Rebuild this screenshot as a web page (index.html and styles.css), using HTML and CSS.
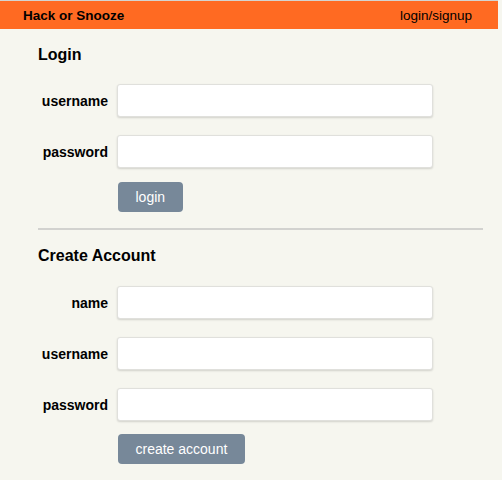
FILE: index.html
```html
<!DOCTYPE html>
<html>
<head>
<meta charset="utf-8">
<link rel="stylesheet" href="styles.css">
</head>
<body>
<div class="page">
  <nav class="nav">
    <span class="brand">Hack or Snooze</span>
    <span class="nav-link">login/signup</span>
  </nav>
  <main class="forms">
    <form class="account-form">
      <h3 class="form-title">Login</h3>
      <div class="row"><label class="label">username</label><input class="field" type="text"></div>
      <div class="row row-last"><label class="label">password</label><input class="field" type="password"></div>
      <div class="actions"><button class="btn" type="button">login</button></div>
    </form>
    <hr class="divider">
    <form class="account-form">
      <h3 class="form-title title-create">Create Account</h3>
      <div class="row"><label class="label">name</label><input class="field" type="text"></div>
      <div class="row"><label class="label">username</label><input class="field" type="text"></div>
      <div class="row row-last2"><label class="label">password</label><input class="field" type="password"></div>
      <div class="actions"><button class="btn" type="button">create account</button></div>
    </form>
  </main>
</div>
</body>
</html>
```
FILE: styles.css
```css
html, body {
  margin: 0;
  padding: 0;
  background: #f6f6ef;
}
.page {
  width: 498px;
  height: 479px;
  border-top: 1px solid #d4d4d0;
  font-family: "Liberation Sans", Arial, sans-serif;
  color: #000;
}
.nav {
  height: 28px;
  background: #ff6a22;
  display: flex;
  align-items: center;
  justify-content: space-between;
  padding: 0 26px 0 23px;
  font-size: 13.5px;
}
.brand {
  font-weight: bold;
}
.forms {
  width: 445px;
  padding: 17px 0 0 38px;
}
.account-form {
  display: flex;
  flex-direction: column;
  margin: 0;
}
.form-title {
  margin: 0 0 20px 0;
  font-size: 16px;
  line-height: 18px;
  font-weight: bold;
}
.title-create {
  margin-bottom: 21px;
}
.row {
  display: flex;
  align-items: center;
  gap: 9px;
  margin-bottom: 18px;
}
.row-last {
  margin-bottom: 14px;
}
.row-last2 {
  margin-bottom: 13px;
}
.label {
  width: 70px;
  text-align: right;
  font-size: 14px;
  font-weight: bold;
}
.field {
  width: 316px;
  height: 33px;
  box-sizing: border-box;
  border: 1px solid #e0e0dc;
  border-radius: 3px;
  background: #fff;
  box-shadow: 0 1px 2px rgba(0, 0, 0, 0.15);
  padding: 0 6px;
  margin: 0;
}
.actions {
  display: flex;
  padding-left: 80px;
}
.btn {
  height: 30px;
  padding: 0 17.5px;
  border: none;
  border-radius: 4px;
  background: #778899;
  color: #fff;
  font-family: "Liberation Sans", Arial, sans-serif;
  font-size: 14px;
}
.divider {
  margin: 16px 0 17px 0;
  border: none;
  border-top: 2px solid #d2d2cf;
  height: 0;
}
```
